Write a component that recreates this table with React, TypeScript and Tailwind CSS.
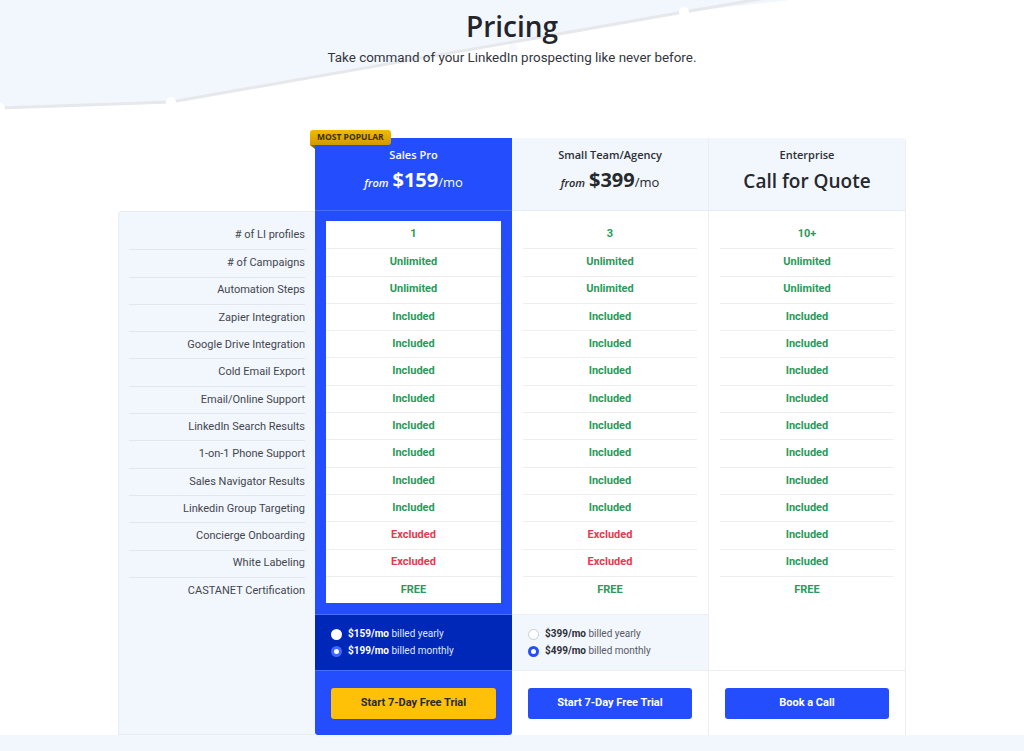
import type { ReactNode } from "react";

const HEAD = { fontFamily: '"Open Sans", "Noto Sans", sans-serif' };
const BODY = { fontFamily: 'Roboto, "Liberation Sans", sans-serif' };

type Value = "in" | "out" | "free" | string;

interface Feature {
  label: string;
  values: [Value, Value, Value];
}

const FEATURES: Feature[] = [
  { label: "# of LI profiles", values: ["1", "3", "10+"] },
  { label: "# of Campaigns", values: ["Unlimited", "Unlimited", "Unlimited"] },
  { label: "Automation Steps", values: ["Unlimited", "Unlimited", "Unlimited"] },
  { label: "Zapier Integration", values: ["in", "in", "in"] },
  { label: "Google Drive Integration", values: ["in", "in", "in"] },
  { label: "Cold Email Export", values: ["in", "in", "in"] },
  { label: "Email/Online Support", values: ["in", "in", "in"] },
  { label: "LinkedIn Search Results", values: ["in", "in", "in"] },
  { label: "1-on-1 Phone Support", values: ["in", "in", "in"] },
  { label: "Sales Navigator Results", values: ["in", "in", "in"] },
  { label: "Linkedin Group Targeting", values: ["in", "in", "in"] },
  { label: "Concierge Onboarding", values: ["out", "out", "in"] },
  { label: "White Labeling", values: ["out", "out", "in"] },
  { label: "CASTANET Certification", values: ["free", "free", "free"] }
];

function Cell({ value }: { value: Value }) {
  if (value === "out") return <span className="text-[#e8384f]">Excluded</span>;
  if (value === "in") return <span className="text-[#2a9a5a]">Included</span>;
  if (value === "free") return <span className="text-[#2a9a5a]">FREE</span>;
  return <span className="text-[#2a9a5a]">{value}</span>;
}

function ValueRows({ col }: { col: 0 | 1 | 2 }) {
  return (
    <div className="flex flex-col" style={BODY}>
      {FEATURES.map((f, i) => (
        <div
          key={f.label}
          className={`flex h-[27.3px] items-center justify-center text-[11px] font-bold ${
            i > 0 ? "border-t border-[#eceef2]" : ""
          }`}
        >
          <Cell value={f.values[col]} />
        </div>
      ))}
    </div>
  );
}

function Radio({ checked, dark }: { checked: boolean; dark: boolean }) {
  if (dark) {
    return checked ? (
      <span className="h-[11px] w-[11px] rounded-full border-[3px] border-[#3f66ff] bg-white" />
    ) : (
      <span className="h-[11px] w-[11px] rounded-full bg-white" />
    );
  }
  return checked ? (
    <span className="h-[11px] w-[11px] rounded-full border-[3px] border-[#234dfd] bg-white" />
  ) : (
    <span className="h-[11px] w-[11px] rounded-full border border-[#c9ccd3] bg-white" />
  );
}

function Billing({ yearly, monthly, dark }: { yearly: string; monthly: string; dark: boolean }) {
  const strong = dark ? "text-white" : "text-[#2d2f36]";
  const soft = dark ? "text-[#dfe6ff]" : "text-[#555a63]";
  return (
    <div className="flex flex-col gap-[5px] pl-[16px] pt-[13px] text-[10px] leading-[12px]" style={BODY}>
      <div className="flex h-[12px] items-center gap-[6px]">
        <Radio checked={false} dark={dark} />
        <span>
          <b className={strong}>{yearly}</b> <span className={soft}>billed yearly</span>
        </span>
      </div>
      <div className="flex h-[12px] items-center gap-[6px]">
        <Radio checked dark={dark} />
        <span>
          <b className={strong}>{monthly}</b> <span className={soft}>billed monthly</span>
        </span>
      </div>
    </div>
  );
}

function Button({ children, yellow }: { children: ReactNode; yellow?: boolean }) {
  return (
    <div className="px-[16px] pt-[17px]">
      <button
        type="button"
        style={BODY}
        className={`h-[31px] w-full rounded-[3px] text-[11px] font-bold ${
          yellow ? "bg-[#ffc107] text-[#2a2a2a]" : "bg-[#234dfd] text-white"
        }`}
      >
        {children}
      </button>
    </div>
  );
}

function Price({ amount, light }: { amount: string; light?: boolean }) {
  return (
    <div className={`mt-[6px] flex items-baseline justify-center ${light ? "text-white" : "text-[#26282e]"}`} style={HEAD}>
      <span className="mr-[4px] text-[11px] font-semibold italic">from</span>
      <span className="text-[20px] font-bold leading-none">{amount}</span>
      <span className="text-[13px] font-medium">/mo</span>
    </div>
  );
}

export default function App() {
  return (
    <div className="relative min-h-[751px] w-full overflow-hidden bg-white">
      <svg className="absolute left-0 top-0" width="1024" height="120" viewBox="0 0 1024 120">
        <polygon points="0,0 790,0 684,12 171,102 0,108" fill="#f2f6fd" />
        <polyline points="0,108 171,102 684,12 790,-6" fill="none" stroke="#e6e8ec" strokeWidth="3" />
        <circle cx="171" cy="102" r="5" fill="#ffffff" />
        <circle cx="684" cy="12" r="5" fill="#ffffff" />
        <circle cx="0" cy="108" r="5" fill="#ffffff" />
        <circle cx="513" cy="48" r="4" fill="#f7f9fe" />
      </svg>

      <div className="relative flex flex-col items-center pt-[8px]">
        <h1 className="text-[28px] font-semibold leading-[36px] text-[#23252b]" style={HEAD}>
          Pricing
        </h1>
        <p className="mt-[4px] text-[13.4px] leading-[20px] text-[#33363c]" style={BODY}>
          Take command of your LinkedIn prospecting like never before.
        </p>
      </div>

      <div className="relative ml-[118px] mt-[70px] flex h-[597px] w-[788px]">
        {/* labels */}
        <div className="mt-[73px] flex w-[197px] flex-col rounded-tl-[4px] border border-r-0 border-[#e8edf5] bg-[#f2f6fd] px-[10px] pt-[10px]">
          {FEATURES.map((f, i) => (
            <div
              key={f.label}
              style={BODY}
              className={`flex h-[27.3px] items-center justify-end text-[11px] text-[#43464d] ${
                i > 0 ? "border-t border-[#e2e6ee]" : ""
              }`}
            >
              {f.label}
            </div>
          ))}
        </div>

        {/* Sales Pro */}
        <div className="relative flex w-[197px] flex-col rounded-b-[3px] bg-[#234dfd]">
          <div className="absolute left-[-5px] top-[-8px] flex h-[15px] items-center rounded-t-[3px] rounded-br-[3px] bg-gradient-to-b from-[#f5ba00] to-[#cf9a00] px-[7px] text-[8.5px] font-bold text-[#3d3000]" style={HEAD}>
            MOST POPULAR
          </div>
          <div className="absolute left-[-5px] top-[7px] h-0 w-0 border-l-[5px] border-t-[4px] border-l-transparent border-t-[#8a6a00]" />
          <div className="flex h-[73px] flex-col items-center border-b border-[#4a6dff] pt-[9px]">
            <div className="text-[11px] font-semibold text-white" style={HEAD}>
              Sales Pro
            </div>
            <Price amount="$159" light />
          </div>
          <div className="h-[403px] px-[11px] pt-[10px]">
            <div className="bg-white">
              <ValueRows col={0} />
            </div>
          </div>
          <div className="h-[57px] border-y border-[#4a6dff] bg-[#0028b8]">
            <Billing yearly="$159/mo" monthly="$199/mo" dark />
          </div>
          <Button yellow>Start 7-Day Free Trial</Button>
        </div>

        {/* Small Team */}
        <div className="flex w-[196px] flex-col">
          <div className="flex h-[73px] flex-col items-center border-b border-[#e8edf5] bg-[#f2f6fd] pt-[9px]">
            <div className="text-[11px] font-semibold text-[#2d2f36]" style={HEAD}>
              Small Team/Agency
            </div>
            <Price amount="$399" />
          </div>
          <div className="h-[403px] px-[11px] pt-[10px]">
            <ValueRows col={1} />
          </div>
          <div className="h-[57px] border-y border-[#eceef2] bg-[#f2f6fd]">
            <Billing yearly="$399/mo" monthly="$499/mo" dark={false} />
          </div>
          <Button>Start 7-Day Free Trial</Button>
        </div>

        {/* Enterprise */}
        <div className="flex w-[198px] flex-col rounded-tr-[4px] border-x border-[#eceef2]">
          <div className="flex h-[73px] flex-col items-center rounded-tr-[4px] border-b border-[#e8edf5] bg-[#f2f6fd] pt-[9px]">
            <div className="text-[11px] font-semibold text-[#2d2f36]" style={HEAD}>
              Enterprise
            </div>
            <div className="mt-[3px] text-[19px] font-semibold text-[#26282e]" style={HEAD}>
              Call for Quote
            </div>
          </div>
          <div className="h-[403px] px-[11px] pt-[10px]">
            <ValueRows col={2} />
          </div>
          <div className="h-[57px] border-b border-[#eceef2]" />
          <Button>Book a Call</Button>
        </div>
      </div>

      <div className="h-[16px] w-full bg-[#f2f6fd]" />
    </div>
  );
}
